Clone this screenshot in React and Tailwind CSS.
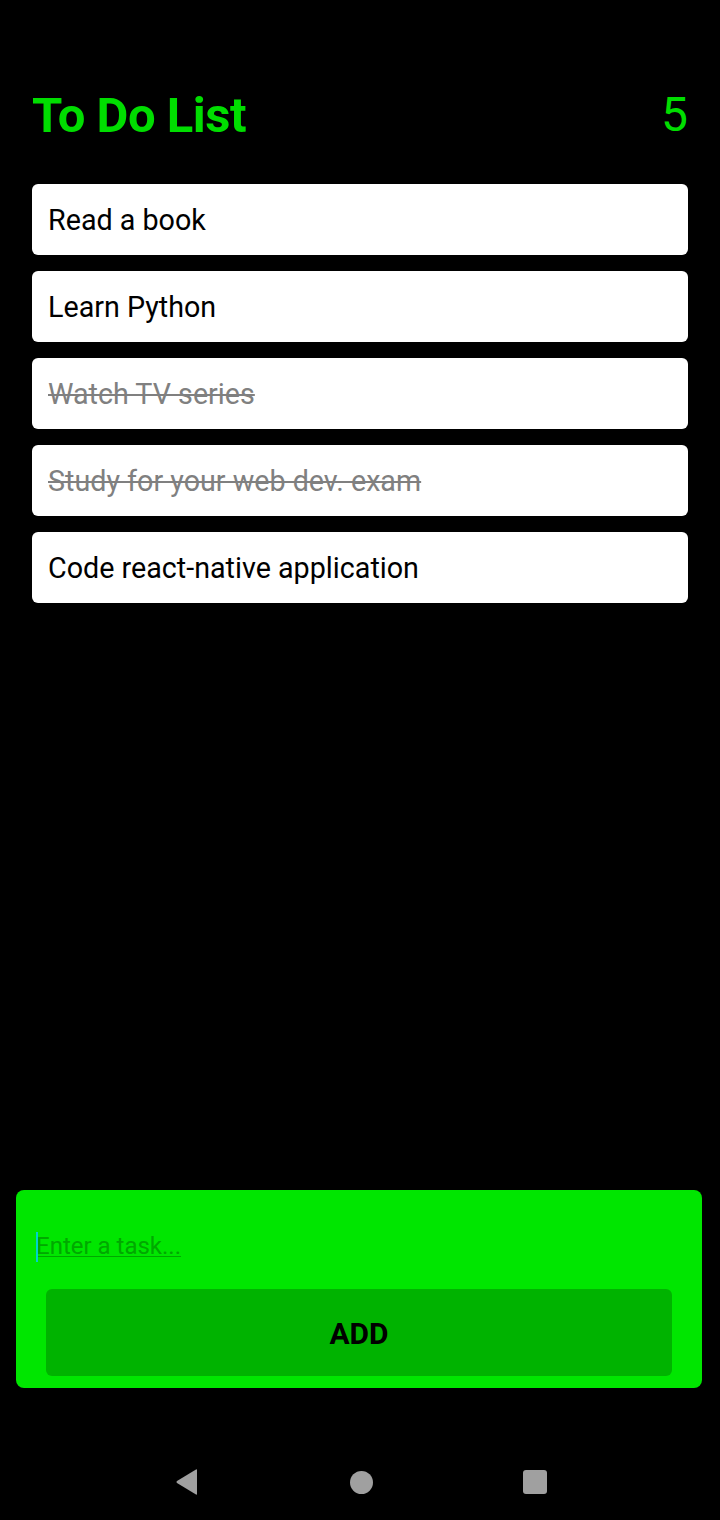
import { useState } from "react";

const TASKS = [
  { id: 1, text: "Read a book", done: false },
  { id: 2, text: "Learn Python", done: false },
  { id: 3, text: "Watch TV series", done: true },
  { id: 4, text: "Study for your web dev. exam", done: true },
  { id: 5, text: "Code react-native application", done: false },
];

export default function App() {
  const [tasks] = useState(TASKS);

  return (
    <div
      className="w-[720px] h-[1520px] bg-black flex flex-col"
      style={{ fontFamily: "Roboto, 'Liberation Sans', sans-serif" }}
    >
      {/* Header */}
      <div className="flex items-center justify-between px-8 pt-[68px] h-[162px]">
        <h1 className="text-[49px] font-bold text-[#00dd00] leading-none tracking-[-0.5px]">To Do List</h1>
        <span className="text-[48px] text-[#00dd00] leading-none">{tasks.length}</span>
      </div>

      {/* Task list */}
      <div className="flex flex-col gap-4 px-8 pt-[22px]">
        {tasks.map((task) => (
          <div key={task.id} className="h-[71px] bg-white rounded-md flex items-center px-4 pt-[3px]">
            <span
              className={
                task.done
                  ? "text-[28.7px] text-[#808080] line-through"
                  : "text-[28.7px] text-black"
              }
            >
              {task.text}
            </span>
          </div>
        ))}
      </div>

      <div className="flex-1" />

      {/* Input panel */}
      <div className="ml-4 mr-[18px] bg-[#00e600] rounded-lg pt-[30px] pb-3 px-[30px]">
        <div className="flex items-center h-[52px] -ml-[10px] relative">
          <span className="absolute left-0 top-[12px] w-[2px] h-[30px] bg-[#00d0d0]" />
          <span className="text-[24px] text-[#00a800] underline decoration-1 underline-offset-2">Enter a task...</span>
        </div>
        <button className="mt-[17px] w-full h-[87px] bg-[#00b300] rounded-md flex items-center justify-center">
          <span className="text-[30px] font-bold text-black pt-[2px]">ADD</span>
        </button>
      </div>

      {/* Android nav bar */}
      <div className="h-[132px] flex items-center justify-center gap-[150px] pt-[56px]">
        <svg width="26" height="28" viewBox="0 0 26 28">
          <path d="M23 2 L23 26 Q23 27 22 26.5 L3 15 Q1.8 14 3 13 L22 1.5 Q23 1 23 2 Z" fill="#a0a0a0" />
        </svg>
        <div className="w-[23px] h-[23px] rounded-full bg-[#a0a0a0]" />
        <div className="w-[24px] h-[24px] rounded-[3px] bg-[#a0a0a0]" />
      </div>
    </div>
  );
}
